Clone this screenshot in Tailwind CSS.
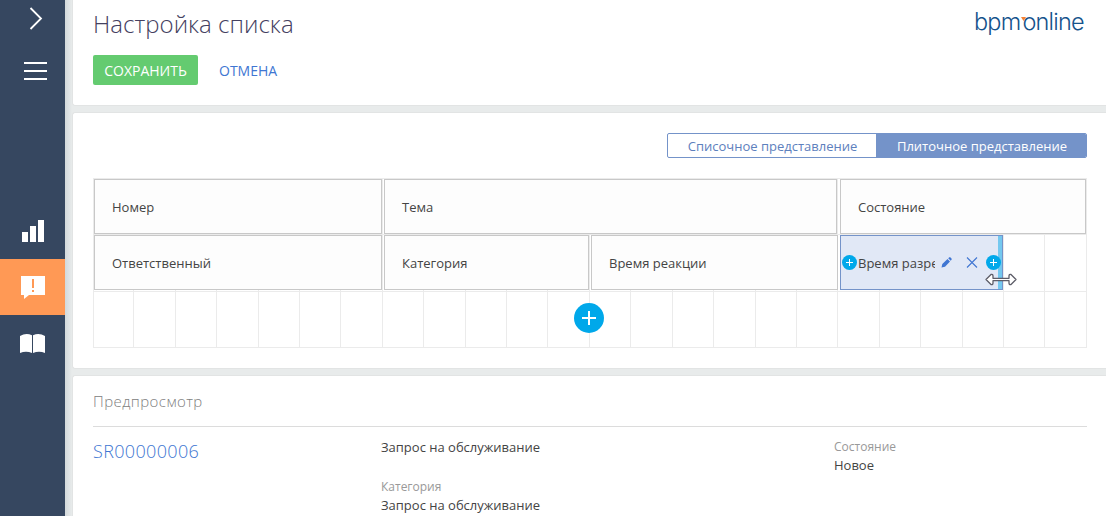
<!DOCTYPE html>
<html lang="ru">
<head>
<meta charset="utf-8">
<title>Настройка списка</title>
<script src="https://cdn.jsdelivr.net/npm/@tailwindcss/browser@4"></script>
</head>
<body class="flex h-[516px] w-[1106px] overflow-hidden bg-[#e8ebeb] font-['Open_Sans',sans-serif] text-[13px] text-[#444]">
<aside class="flex w-[65px] shrink-0 flex-col bg-[#364760] text-white">
  <div class="h-[38px] pl-[29px] pt-[7px]"><svg class="block" width="14" height="24" fill="none" stroke="currentColor" stroke-width="1.8"><path d="M1.5 1L12 11.5L1.5 22"/></svg></div>
  <div class="flex h-[165px] flex-col gap-[6px] pl-6 pt-6">
    <div class="h-[2px] w-[23px] bg-white"></div><div class="h-[2px] w-[23px] bg-white"></div><div class="h-[2px] w-[23px] bg-white"></div>
  </div>
  <div class="flex h-14 items-start pl-[22px] pt-[17px]"><svg width="22" height="22" fill="currentColor"><path d="M0 12h6v10H0zM8 6h6v16H8zM16 0h6v22h-6z"/></svg></div>
  <div class="flex h-14 bg-[#ff9955] pl-[21px] pt-[17px]"><svg width="24" height="24"><path fill="#fff" d="M0 0h24v19H8l-5 4v-4H0z"/><path fill="#ff9955" d="M11 3h2v9h-2zM11 14h2v2h-2z"/></svg></div>
  <div class="flex h-14 pl-5 pt-[18px]"><svg width="25" height="21" fill="currentColor"><path d="M0 3Q6-.5 12 2.300V20Q6 17.500 0 20ZM13 2.300Q19-.5 25 3V20Q19 17.500 13 20Z"/></svg></div>
</aside>
<div class="w-[7px] shrink-0 bg-linear-to-r from-[#d3d9db] to-[#e8ebeb]"></div>
<main class="flex min-w-0 flex-1 flex-col gap-[6px]">
  <header class="flex h-[106px] shrink-0 justify-between rounded-bl-[3px] border-b border-l border-[#e2e4e4] bg-white pl-5 pr-[21px]">
    <div>
      <h1 class="h-[55px] pt-[7px] text-[24px] font-light leading-[34px] tracking-[0.03px] text-[#444060]">Настройка списка</h1>
      <div class="flex h-[30px] items-center text-[14px]">
        <button class="h-[30px] w-[105px] rounded-[2px] bg-[#64cb70] text-white">СОХРАНИТЬ</button>
        <button class="ml-[21px] text-[#4076d2]">ОТМЕНА</button>
      </div>
    </div>
    <div class="relative mt-[8px] h-7 w-[111px] whitespace-nowrap font-['Inter',sans-serif] text-[23.5px] font-light leading-[28px] tracking-[-0.8px] text-[#15538c]">bpm<span class="ml-[2px]">online</span>
      <svg class="absolute left-[47px] top-[9px]" width="5" height="4"><path fill="#f58233" d="M0 0h5L2.500 4z"/></svg>
    </div>
  </header>
  <section class="h-[257px] shrink-0 rounded-l-[3px] border-y border-l border-[#e2e4e4] bg-white pl-5 pt-5">
    <div class="ml-[574px] flex h-[25px] w-[420px] overflow-hidden rounded-[2px] border border-[#7493c9]">
      <div class="flex w-[208px] items-center justify-center pl-px pt-[2px] text-[#5d80bd]">Списочное представление</div>
      <div class="flex flex-1 items-center justify-center bg-[#7493c9] pl-[2px] pt-[2px] text-white">Плиточное представление</div>
    </div>
    <div class="relative mt-5 h-[170px] w-[994px]">
      <div id="cells" class="absolute inset-0 grid grid-cols-[41px_42px_41px_42px_41px_41px_42px_41px_42px_41px_41px_42px_41px_42px_41px_42px_41px_41px_42px_41px_42px_41px_41px_42px] grid-rows-[57px_57px_56px] border-0 shadow-[inset_1px_1px_0_#ebebeb]"></div>
      <div class="relative flex flex-col gap-px pl-px pt-px">
        <div class="flex h-[55px]">
          <div class="flex w-[288px] items-center border border-[#c8c8c8] bg-[#fdfdfd] pl-[17px] pt-[2px]">Номер</div>
          <div class="ml-[2px] flex w-[453px] items-center border border-[#c8c8c8] bg-[#fdfdfd] pl-[17px] pt-[2px]">Тема</div>
          <div class="ml-[3px] flex w-[246px] items-center border border-[#c8c8c8] bg-[#fdfdfd] pl-[17px] pt-[2px]">Состояние</div>
        </div>
        <div class="flex h-[55px]">
          <div class="flex w-[288px] items-center border border-[#c8c8c8] bg-[#fdfdfd] pl-[17px] pt-[2px]">Ответственный</div>
          <div class="ml-[2px] flex w-[205px] items-center border border-[#c8c8c8] bg-[#fdfdfd] pl-[17px] pt-[2px]">Категория</div>
          <div class="ml-[2px] flex w-[247px] items-center border border-[#c8c8c8] bg-[#fdfdfd] pl-[17px] pt-[2px]">Время реакции</div>
          <div class="relative ml-[2px] flex w-[163px] items-center border border-[#7493c9] bg-[#e1e8f6]">
            <svg class="ml-px shrink-0" width="15" height="15"><circle cx="7.500" cy="7.500" r="7.500" fill="#00a8ea"/><path d="M7.500 4v7M4 7.500h7" stroke="#fff" stroke-width="1"/></svg>
            <div class="ml-px w-[77px] overflow-hidden whitespace-nowrap pt-[2px]">Время разрешения</div>
            <svg class="ml-[6px] shrink-0" width="11" height="11" fill="#4076d2"><path d="M.5 10.500L1.300 7L6.500 2L9 4.500L4 9.700ZM7.200 1.300L8.300.3Q9 0 9.600.600L10.500 1.500Q11 2.200 10.500 2.700L9.700 3.700Z"/></svg>
            <svg class="ml-[14px] shrink-0" width="12" height="11" stroke="#4076d2" stroke-width="1.100"><path d="M1 .5L11 10.500M11 .5L1 10.500"/></svg>
            <div class="absolute right-0 top-0 h-full w-1 bg-[#74c8ef]"></div>
            <svg class="absolute right-px top-[19px]" width="15" height="15"><circle cx="7.500" cy="7.500" r="7.500" fill="#00a8ea"/><path d="M7.500 4v7M4 7.500h7" stroke="#fff" stroke-width="1"/></svg>
            <svg class="absolute left-[144px] top-[37px]" width="32" height="13" fill="#fff" stroke="#5d5d68" stroke-width="1.300" stroke-linejoin="round"><path d="M1 6.500L6 1.500Q8 1 8 3V5.300H24V3Q24 1 26 1.500L31 6.500L26 11.500Q24 12 24 10V7.700H8V10Q8 12 6 11.500Z"/></svg>
          </div>
        </div>
      </div>
      <svg class="absolute left-[481px] top-[125px]" width="30" height="30"><circle cx="15" cy="15" r="15" fill="#00a8ea"/><path d="M15 8v14M8 15h14" stroke="#fff" stroke-width="2"/></svg>
    </div>
  </section>
  <section class="h-[150px] shrink-0 rounded-tl-[3px] border-l border-t border-[#e2e4e4] bg-white pl-5">
    <h2 class="h-[51px] w-[994px] border-b border-[#dcdcdc] pt-[14px] text-[15px] font-light leading-[22px] tracking-[0.43px] text-[#808080]">Предпросмотр</h2>
    <div class="flex leading-[18px]">
      <div class="w-[288px] pt-[11px] text-[18px] font-light leading-[26px] tracking-[0.35px] text-[#4076d2]">SR00000006</div>
      <div class="w-[453px] pt-[11px]"><div>Запрос на обслуживание</div><div class="mt-[22px] text-[12px] text-[#999]">Категория</div><div>Запрос на обслуживание</div></div>
      <div class="pt-[11px]"><div class="text-[12px] text-[#999]">Состояние</div><div>Новое</div></div>
    </div>
  </section>
</main>
<script>
const cells = document.getElementById('cells');
for (let i = 0; i < 72; i++) {
  const cell = document.createElement('div');
  cell.className = 'border-b border-r border-[#ebebeb]';
  cells.append(cell);
}
</script>
</body>
</html>
